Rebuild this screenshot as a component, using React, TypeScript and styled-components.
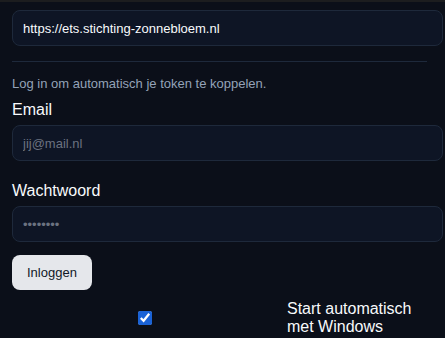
import styled, { createGlobalStyle } from "styled-components";

const GlobalStyle = createGlobalStyle`
  html, body {
    margin: 0;
    padding: 0;
    background: #0b0f19;
    overflow: hidden;
  }
  body {
    font-family: "Liberation Sans", Arial, sans-serif;
    color: #f8fafc;
  }
`;

const TopEdge = styled.div`
  height: 2px;
  background: #1c1d1f;
`;

const Panel = styled.div`
  display: flex;
  flex-direction: column;
  align-items: flex-start;
  padding: 8px 0 0 12px;
  width: 445px;
  box-sizing: border-box;
`;

const Field = styled.input`
  box-sizing: border-box;
  width: 431px;
  height: 36px;
  padding: 0 10px;
  background: #0e1525;
  border: 1px solid #1e293b;
  border-radius: 8px;
  color: #f8fafc;
  font-family: "Liberation Sans", Arial, sans-serif;
  font-size: 13px;
  outline: none;

  &::placeholder {
    color: #6b7280;
  }
`;

const Divider = styled.hr`
  width: 415px;
  margin: 15px 0 0;
  border: none;
  border-top: 1px solid #1e293b;
`;

const Hint = styled.p`
  margin: 14px 0 0;
  font-size: 13px;
  line-height: 16px;
  color: #94a3b8;
`;

const Label = styled.label<{ gap: number }>`
  display: block;
  margin-top: ${(p) => p.gap}px;
  margin-bottom: 6px;
  font-size: 16px;
  line-height: 18px;
  color: #f8fafc;
`;

const Button = styled.button`
  margin-top: 13px;
  height: 35px;
  padding: 0 15px;
  border: none;
  border-radius: 8px;
  background: #e5e7eb;
  color: #111827;
  font-family: "Liberation Sans", Arial, sans-serif;
  font-size: 13px;
  cursor: pointer;
`;

const StartupRow = styled.label`
  display: grid;
  grid-template-columns: 266px 140px;
  column-gap: 9px;
  align-items: center;
  margin-top: 10px;
  font-size: 16px;
  line-height: 18px;
  color: #f8fafc;
`;

const CheckCell = styled.span`
  display: flex;
  justify-content: center;
`;

const Check = styled.input`
  width: 14px;
  height: 14px;
  margin: 0;
  accent-color: #1a62d6;
`;

export default function App() {
  return (
    <>
      <GlobalStyle />
      <TopEdge />
      <Panel>
        <Field type="text" defaultValue="https://ets.stichting-zonnebloem.nl" />
        <Divider />
        <Hint>Log in om automatisch je token te koppelen.</Hint>
        <Label gap={9} htmlFor="email">
          Email
        </Label>
        <Field id="email" type="email" placeholder="jij@mail.nl" />
        <Label gap={21} htmlFor="pw">
          Wachtwoord
        </Label>
        <Field id="pw" type="password" placeholder="••••••••" />
        <Button>Inloggen</Button>
        <StartupRow>
          <CheckCell>
            <Check type="checkbox" defaultChecked />
          </CheckCell>
          <span>Start automatisch met Windows</span>
        </StartupRow>
      </Panel>
    </>
  );
}
